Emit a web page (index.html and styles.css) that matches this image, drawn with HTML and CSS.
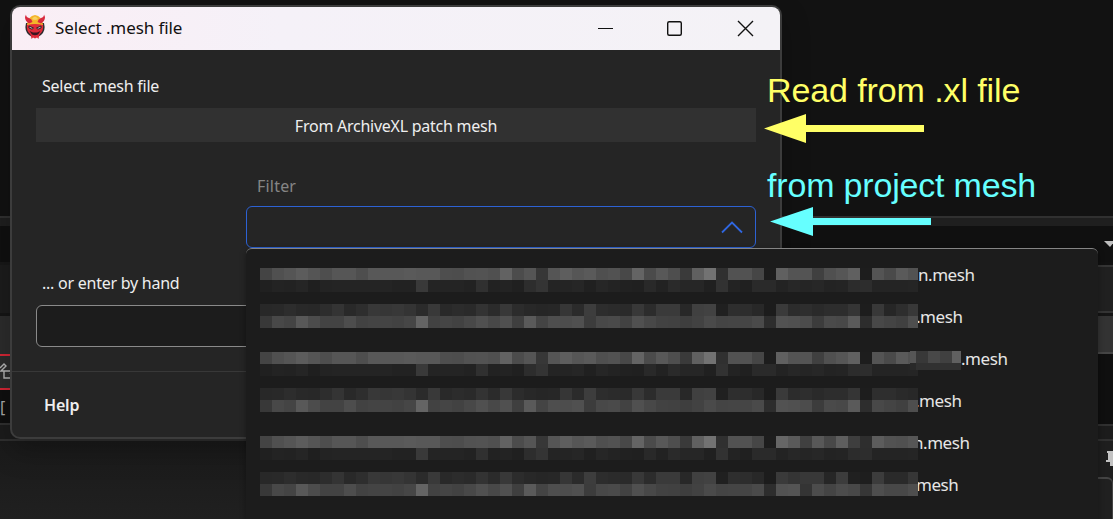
FILE: index.html
```
<!DOCTYPE html>
<html lang="en">
<head>
<meta charset="utf-8">
<title>Select .mesh file</title>
<link rel="stylesheet" href="styles.css">
</head>
<body>
<div class="desktop">
  <div class="backdrop">
    <div class="side left">
      <div class="b-top"></div><div class="b-line"></div><div class="b-strip"></div><div class="b-dark"></div>
      <div class="b-panel"></div><div class="b-row"></div>
      <div class="b-red"><svg width="12" height="32" viewBox="0 0 12 32"><g fill="none" stroke="#b5b5b5" stroke-width="1.4"><path d="M0 12L4 8L6 10L1 15H12M4 15V22H12M10 17L12 19"/></g></svg></div>
      <div class="b-code"><span>[</span></div><div class="b-foot"></div><div class="b-base"></div>
    </div>
    <div class="side right">
      <div class="b-top"></div><div class="b-line"></div><div class="b-strip"></div>
      <div class="b-dark"><svg width="22" height="36" viewBox="0 0 22 36"><path d="M13 15H23V16L19 21Z" fill="#bdbdbd"/></svg></div>
      <div class="b-panel"></div><div class="b-row"></div><div class="b-code tall"></div><div class="b-foot"></div>
      <div class="b-base"><svg width="22" height="36" viewBox="0 0 22 36"><path d="M16 10H22V25H19V21H15V19H17V12H16Z" fill="#c2c2c2"/></svg><div class="b-card"></div></div>
    </div>
  </div>

  <div class="dialog">
    <div class="titlebar">
      <svg class="logo" width="22" height="26" viewBox="0 0 22 26">
        <path d="M2 9Q0 17 5 21L8 23H14L17 21Q22 17 20 9Z" fill="#2c2b2e"/>
        <path d="M3 10Q2 17 6 20L7 22L7.500 25L9 23.500L11 24.500L13 23.500L14.500 25L15 22L16 20Q20 17 19 10Z" fill="#df2b39"/>
        <path d="M3 11Q4 2 11 1Q18 2 19 11Q11 9 3 11Z" fill="#f3b52a"/>
        <path d="M8 5Q11 0 14 5Q11 7 8 5Z" fill="#f8cf62"/>
        <path d="M2 0.500Q2 3 5 4Q8 5 8.500 8L5 9.500Q1 7 1 3ZM20 .5Q20 3 17 4Q14 5 13.500 8L17 9.500Q21 7 21 3Z" fill="#d8293e"/>
        <path d="M5 12L9.500 14L8 15.200L5 14ZM17 12L12.500 14L14 15.200L17 14Z" fill="#c9c3ca" stroke="#29191d" stroke-width=".9"/>
        <path d="M5.500 17L9 18.500H13L16.500 17L14 20.500Q11 22 8 20.500Z" fill="#3a1620"/>
      </svg>
      <span class="title">Select .mesh file</span>
      <svg class="controls" width="160" height="20" viewBox="0 0 160 20"><g fill="none" stroke="#111" stroke-width="1.4"><path d="M0 10.500H15" stroke-width="1"/><rect x="69.700" y="3.700" width="13.600" height="13.600" rx="1.500"/><path d="M140 3L155 18M155 3L140 18"/></g></svg>
    </div>
    <div class="content">
      <div class="label first"><span>Select .mesh file</span></div>
      <div class="patch"><span>From ArchiveXL patch mesh</span></div>
      <div class="filter">
        <div class="filter-label"><span>Filter</span></div>
        <div class="combo"><svg width="22" height="14" viewBox="0 0 22 14"><path d="M1 12.500L11 2.500L21 12.500" fill="none" stroke="#2f66df" stroke-width="1.800"/></svg></div>
      </div>
      <div class="label second"><span>... or enter by hand</span></div>
      <div class="input"></div>
    </div>
    <div class="footer"><span>Help</span></div>
  </div>

  <div class="popup">
    <div class="item"><svg class="mosaic bright" width="658" height="24"></svg><span class="n1">n.mesh</span></div>
    <div class="item"><svg class="mosaic dim" width="658" height="24"></svg><span class="n2">.mesh</span></div>
    <div class="item"><svg class="mosaic bright" width="658" height="24"></svg><svg class="patchlet" width="51" height="19"><rect width="51" height="12" fill="#484848"/><rect width="6" height="12" fill="#565656"/><rect x="6" width="12" height="12" fill="#383838"/><rect x="30" width="12" height="12" fill="#404040"/><rect x="42" width="9" height="12" fill="#606060"/><rect y="12" width="51" height="7" fill="#313131"/><rect y="12" width="6" height="7" fill="#292929"/></svg><span class="n3">.mesh</span></div>
    <div class="item"><svg class="mosaic dim" width="658" height="24"></svg><span class="n4">.mesh</span></div>
    <div class="item"><svg class="mosaic bright" width="658" height="24"></svg><span class="n5">n.mesh</span></div>
    <div class="item"><svg class="mosaic dim" width="658" height="24"></svg><span class="n6">mesh</span></div>
  </div>

  <div class="note yellow"><span>Read from .xl file</span>
    <svg width="160" height="30" viewBox="0 0 160 30"><path d="M0 14.500L42 0V11H160V18H42V29Z" fill="currentColor"/></svg></div>
  <div class="note cyan"><span>from project mesh</span>
    <svg width="161" height="30" viewBox="0 0 161 30"><path d="M0 14.500L43 0V11H161V18H43V29Z" fill="currentColor"/></svg></div>
</div>
<script src="mosaic.js"></script>
</body>
</html>
```
FILE: styles.css
```
body { margin: 0; background: #111; }
.desktop { position: relative; width: 1113px; height: 519px; overflow: hidden; font-family: "Noto Sans", "Open Sans", sans-serif; font-size: 16px; color: #eee; }
span { white-space: nowrap; }
svg { display: block; flex: none; }

.backdrop { display: flex; height: 519px; }
.side { display: flex; flex-direction: column; flex: 1; }
.side.right { flex: none; width: 22px; }
.side > div { box-sizing: border-box; flex: none; }
.b-top { height: 216px; background: #121212; }
.b-line { height: 2px; background: #303030; }
.b-strip { height: 8px; background: #1f1f1f; }
.b-dark { height: 36px; background: #101010; }
.b-panel { height: 51px; background: #1c1c1c; border-top: 3px solid #181818; }
.b-row { height: 41px; background: #2c2c2c; border-top: 3px solid #151515; }
.b-red { height: 36px; background: #2c2c2c; border: solid #d32635; border-width: 2px 0; }
.b-code { height: 33px; background: #0f0f0f; font-size: 16px; line-height: 34px; color: #aaa; }
.b-foot { height: 18px; background: #1c1c1c; border: solid #303030; border-width: 2px 0; }
.side > .b-base { flex: 1; background: #1e1e1e; }
.left .b-base { background: linear-gradient(#1a1a1a, #202020); }
.right .b-panel { height: 48px; margin-top: 3px; background: #202020; border: solid #343434; border-width: 2px 0; }
.right .b-row { background: #333; border-bottom: 2px solid #454545; }
.right .tall { height: 70px; }
.right .b-foot { height: 17px; }
.b-card { height: 50px; border: solid #444; border-width: 2px 1px 0 0; border-radius: 0 6px 0 0; background: #202020; }

.dialog { position: absolute; left: 10px; top: 5px; width: 768px; height: 430px; border: 2px solid #3c3c3c; border-radius: 10px; overflow: hidden; background: #252525; box-shadow: 0 12px 28px rgba(0,0,0,.25); display: flex; flex-direction: column; }
.titlebar { flex: none; height: 43px; background: linear-gradient(90deg, #faeef5, #f5f1f8 35%, #f4f2f6); color: #111; display: flex; align-items: center; padding: 0 22px 0 12px; }
.logo { margin-top: -3px; }
.title { margin: -2px 0 0 9px; font-size: 17px; letter-spacing: -.1px; }
.controls { margin: -2px 0 0 auto; }
.content { flex: none; height: 321px; padding: 0 24px; display: flex; flex-direction: column; }
.label { padding-left: 6px; line-height: 22px; letter-spacing: -.25px; }
.first { margin-top: 25px; }
.patch { margin-top: 11px; height: 34px; background: #313131; text-align: center; line-height: 36px; letter-spacing: -.25px; }
.filter { margin: 33px 0 0 210px; }
.filter-label { padding-left: 11px; line-height: 22px; color: #858585; letter-spacing: .2px; }
.combo { margin-top: 9px; height: 40px; border: 1.5px solid #2d62d4; border-radius: 6px; display: flex; align-items: center; justify-content: flex-end; padding-right: 12px; }
.second { margin-top: 24px; }
.input { box-sizing: border-box; margin-top: 11px; height: 42px; border: 1px solid #8a8a8a; border-radius: 6px; background: #1c1c1c; }
.footer { flex: 1; border-top: 1px solid #383838; padding: 22px 32px 0; line-height: 22px; font-weight: 600; letter-spacing: -.2px; }

.popup { position: absolute; left: 246px; top: 248px; width: 852px; height: 280px; box-sizing: border-box; padding: 5px 0 0 14px; border-top: 1px solid #858585; border-radius: 6px; background: #1c1c1c; box-shadow: 0 2px 6px rgba(0,0,0,.35); }
.item { height: 42px; display: flex; line-height: 41px; font-size: 17px; letter-spacing: -.45px; color: #e6e6e6; }
.mosaic, .patchlet { position: relative; z-index: 1; }
.bright { margin-top: 14px; }
.dim { margin-top: 8px; }
.patchlet { margin: 13px 0 0 -8px; }
.n2 { margin-left: -2px; }
.n4 { margin-left: -3px; }
.n5 { margin-left: -5px; }
.n6 { margin-left: -2px; }

.note { position: absolute; z-index: 2; font: 34px/40px "Liberation Sans", Arial, sans-serif; }
.note span { display: block; letter-spacing: -.1px; }
.yellow { left: 767px; top: 70px; color: #ffff66; }
.yellow svg { margin: 4px 0 0 -3px; }
.cyan { left: 767px; top: 165px; color: #66ffff; }
.cyan span { letter-spacing: -.18px; }
.cyan svg { margin: 2px 0 0 3px; }
```
FILE: mosaic.js
```
// Grey levels of the censored names, one hex pair per 12px cell.
const A = "4450555c554e56564e5858585a58584e4d525350624c5537555e565a4f5248644b584e3a6072305252461d605454405056601d544a5a52";
const B = "202322251f232424242424222239242424223022232" + "02d3424242620262321202922" + "2a2626203223202a2a23272527" + "23242c2d24242425";
const C = "28292d29282d34292e383638342b39292c2a332b382c282627362b3d2d2b2a382c3a3a28404220" + "2e2d281c3a2c2e2a2d2d351d38262e38";
const D = "384844584c43434d42444442466442454248504850" + "3f5a444e4d503c484a42504842413e424a4445454a2d52504c3c4a485a2d4844404e";
const rows = [
  [A, B], [C, D], [A, B],
  [C.slice(0, 102) + "2e2e2a28", D],
  [A.slice(0, 86) + "665a4058485e3e2e5c525056", B],
  [C.slice(0, 86) + "3a343838263c201e3c2a2a36", D.slice(0, 86) + "5254344c444c48364e48484e"]
];
document.querySelectorAll(".mosaic").forEach((svg, i) => {
  rows[i].forEach((line, y) => {
    line.match(/../g).forEach((v, x) => {
      const r = document.createElementNS("http://www.w3.org/2000/svg", "rect");
      r.setAttribute("x", x * 12);
      r.setAttribute("y", y * 12);
      r.setAttribute("width", 12);
      r.setAttribute("height", 12);
      r.setAttribute("fill", "#" + v + v + v);
      svg.appendChild(r);
    });
  });
});
```
